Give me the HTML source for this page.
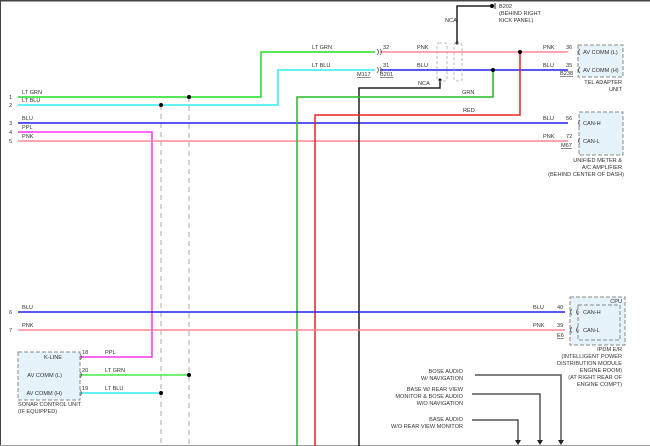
<!DOCTYPE html><html><head><style>body{margin:0;background:#fff}svg{display:block}text{font-family:"Liberation Sans",sans-serif;font-size:5.6px;fill:#333}</style></head><body>
<svg width="650" height="446" viewBox="0 0 650 446">
<rect x="0" y="0" width="650" height="446" fill="#fff"/>
<line x1="0" y1="0.5" x2="650" y2="0.5" stroke="#444" stroke-width="2"/>
<line x1="0.5" y1="0" x2="0.5" y2="446" stroke="#444"/>
<line x1="0" y1="445.5" x2="650" y2="445.5" stroke="#999"/>
<g fill="none" stroke-width="1.5">
<line x1="161" y1="105" x2="161" y2="446" stroke="#aaa" stroke-dasharray="5,4" stroke-width="1"/>
<line x1="189" y1="97" x2="189" y2="446" stroke="#aaa" stroke-dasharray="5,4" stroke-width="1"/>
<polyline points="18,97 261,97 261,52 375,52" stroke="#22dd22"/>
<polyline points="18,105 278,105 278,70 375,70" stroke="#33eeee"/>
<line x1="18" y1="123" x2="568" y2="123" stroke="#2222ee"/>
<polyline points="18,132 152,132 152,357 66,357" stroke="#ff33ee"/>
<line x1="18" y1="141" x2="568" y2="141" stroke="#ff8899"/>
<line x1="380" y1="52" x2="568" y2="52" stroke="#ff8899"/>
<line x1="380" y1="70" x2="568" y2="70" stroke="#2222ee"/>
<polyline points="457,43 457,6 492,6" stroke="#222"/>
<polyline points="440,80 440,88 359,88 359,446" stroke="#222"/>
<polyline points="493,70 493,97 297,97 297,446" stroke="#22bb22"/>
<polyline points="520,52 520,115 315,115 315,446" stroke="#ee2222"/>
<line x1="18" y1="312" x2="565" y2="312" stroke="#2222ee"/>
<line x1="18" y1="330" x2="565" y2="330" stroke="#ff8899"/>
<line x1="66" y1="375" x2="189" y2="375" stroke="#44ee44"/>
<line x1="66" y1="393" x2="161" y2="393" stroke="#33eeee"/>
<polyline points="475,375 561,375 561,440" stroke="#555"/>
<polyline points="472,394 540,394 540,440" stroke="#555"/>
<polyline points="472,420 518,420 518,440" stroke="#555"/>
</g>
<g fill="#222"><path d="M515,440h6l-3,5z"/><path d="M537,440h6l-3,5z"/><path d="M558,440h6l-3,5z"/></g>
<g fill="#000"><circle cx="189" cy="97" r="2"/><circle cx="161" cy="105" r="2"/><circle cx="520" cy="52" r="2"/><circle cx="493" cy="70" r="2"/><circle cx="457" cy="43" r="1.5"/><circle cx="440" cy="80" r="1.5"/><circle cx="492" cy="6" r="2"/><circle cx="189" cy="375" r="2"/><circle cx="161" cy="393" r="2"/></g>
<line x1="495" y1="3" x2="495" y2="9" stroke="#222"/>
<g fill="none" stroke="#aaa" stroke-dasharray="3,2" stroke-width="0.8">
<rect x="437" y="43" width="10" height="38" rx="2"/><rect x="454" y="43" width="8" height="38" rx="2"/>
</g>
<g fill="#e6f3fb" stroke="#888" stroke-dasharray="4,2" stroke-width="1">
<rect x="578" y="45" width="45" height="32"/>
<rect x="579" y="112" width="44" height="43"/>
<rect x="570" y="297" width="55" height="48"/>
<rect x="18" y="352" width="62" height="48"/>
</g>
<rect x="578" y="305" width="42" height="35" fill="none" stroke="#888" stroke-dasharray="4,2"/>
<g fill="none" stroke="#555" stroke-width="0.8">
<path d="M377,49q3,3 0,6M380,49q3,3 0,6M377,67q3,3 0,6M380,67q3,3 0,6"/>
<path d="M580,49q-3,3 0,6M580,67q-3,3 0,6M580,120q-3,3 0,6M580,138q-3,3 0,6M572,309q-3,3 0,6M572,327q-3,3 0,6M578,309q-3,3 0,6M578,327q-3,3 0,6"/>
<path d="M80,354q3,3 0,6M80,372q3,3 0,6M80,390q3,3 0,6"/>
</g>
<text x="9" y="99">1</text><text x="9" y="107">2</text><text x="9" y="125">3</text><text x="9" y="134">4</text><text x="9" y="143">5</text><text x="9" y="314">6</text><text x="9" y="332">7</text>
<text x="22" y="94">LT GRN</text><text x="22" y="102">LT BLU</text><text x="22" y="120">BLU</text><text x="22" y="129">PPL</text><text x="22" y="138">PNK</text>
<text x="22" y="309">BLU</text><text x="22" y="327">PNK</text>
<text x="312" y="49">LT GRN</text><text x="312" y="67">LT BLU</text>
<text x="383" y="49">32</text><text x="383" y="67">31</text><text x="357" y="76" text-decoration="underline">M117</text><text x="380" y="76" text-decoration="underline">B201</text>
<text x="417" y="49">PNK</text><text x="417" y="67">BLU</text><text x="418" y="85">NCA</text><text x="445" y="22">NCA</text>
<text x="462" y="94">GRN</text><text x="463" y="112">RED</text>
<text x="499" y="8">B202</text><text x="499" y="15">(BEHIND RIGHT</text><text x="499" y="22">KICK PANEL)</text>
<text x="543" y="49">PNK</text><text x="543" y="67">BLU</text><text x="566" y="49">36</text><text x="566" y="67">35</text><text x="560" y="75" text-decoration="underline">B238</text>
<text x="583" y="54">AV COMM (L)</text><text x="583" y="72">AV COMM (H)</text>
<g text-anchor="end">
<text x="622" y="84">TEL ADAPTER</text><text x="622" y="91">UNIT</text>
<text x="622" y="162">UNIFIED METER &amp;</text><text x="622" y="169">A/C AMPLIFIER</text><text x="624" y="176">(BEHIND CENTER OF DASH)</text>
<text x="622" y="303">CPU</text>
<text x="622" y="351">IPDM E/R</text><text x="622" y="358">(INTELLIGENT POWER</text><text x="622" y="365">DISTRIBUTION MODULE</text><text x="622" y="372">ENGINE ROOM)</text><text x="622" y="379">(AT RIGHT REAR OF</text><text x="622" y="386">ENGINE COMPT)</text>
<text x="62" y="359">K-LINE</text><text x="62" y="377">AV COMM (L)</text><text x="62" y="395">AV COMM (H)</text>
<text x="463" y="373">BOSE AUDIO</text><text x="463" y="380">W/ NAVIGATION</text>
<text x="463" y="391">BASE W/ REAR VIEW</text><text x="463" y="398">MONITOR &amp; BOSE AUDIO</text><text x="463" y="405">W/O NAVIGATION</text>
<text x="463" y="421">BASE AUDIO</text><text x="463" y="428">W/O REAR VIEW MONITOR</text>
</g>
<text x="543" y="120">BLU</text><text x="543" y="138">PNK</text><text x="566" y="120">56</text><text x="566" y="138">72</text><text x="561" y="147" text-decoration="underline">M67</text>
<text x="583" y="125">CAN-H</text><text x="583" y="143">CAN-L</text>
<text x="533" y="309">BLU</text><text x="533" y="327">PNK</text><text x="557" y="309">40</text><text x="557" y="327">39</text><text x="557" y="337" text-decoration="underline">E6</text>
<text x="583" y="314">CAN-H</text><text x="583" y="332">CAN-L</text>
<text x="82" y="354">18</text><text x="82" y="372">20</text><text x="82" y="390">19</text>
<text x="105" y="354">PPL</text><text x="105" y="372">LT GRN</text><text x="105" y="390">LT BLU</text>
<text x="18" y="406">SONAR CONTROL UNIT</text><text x="18" y="413">(IF EQUIPPED)</text>
</svg></body></html>
